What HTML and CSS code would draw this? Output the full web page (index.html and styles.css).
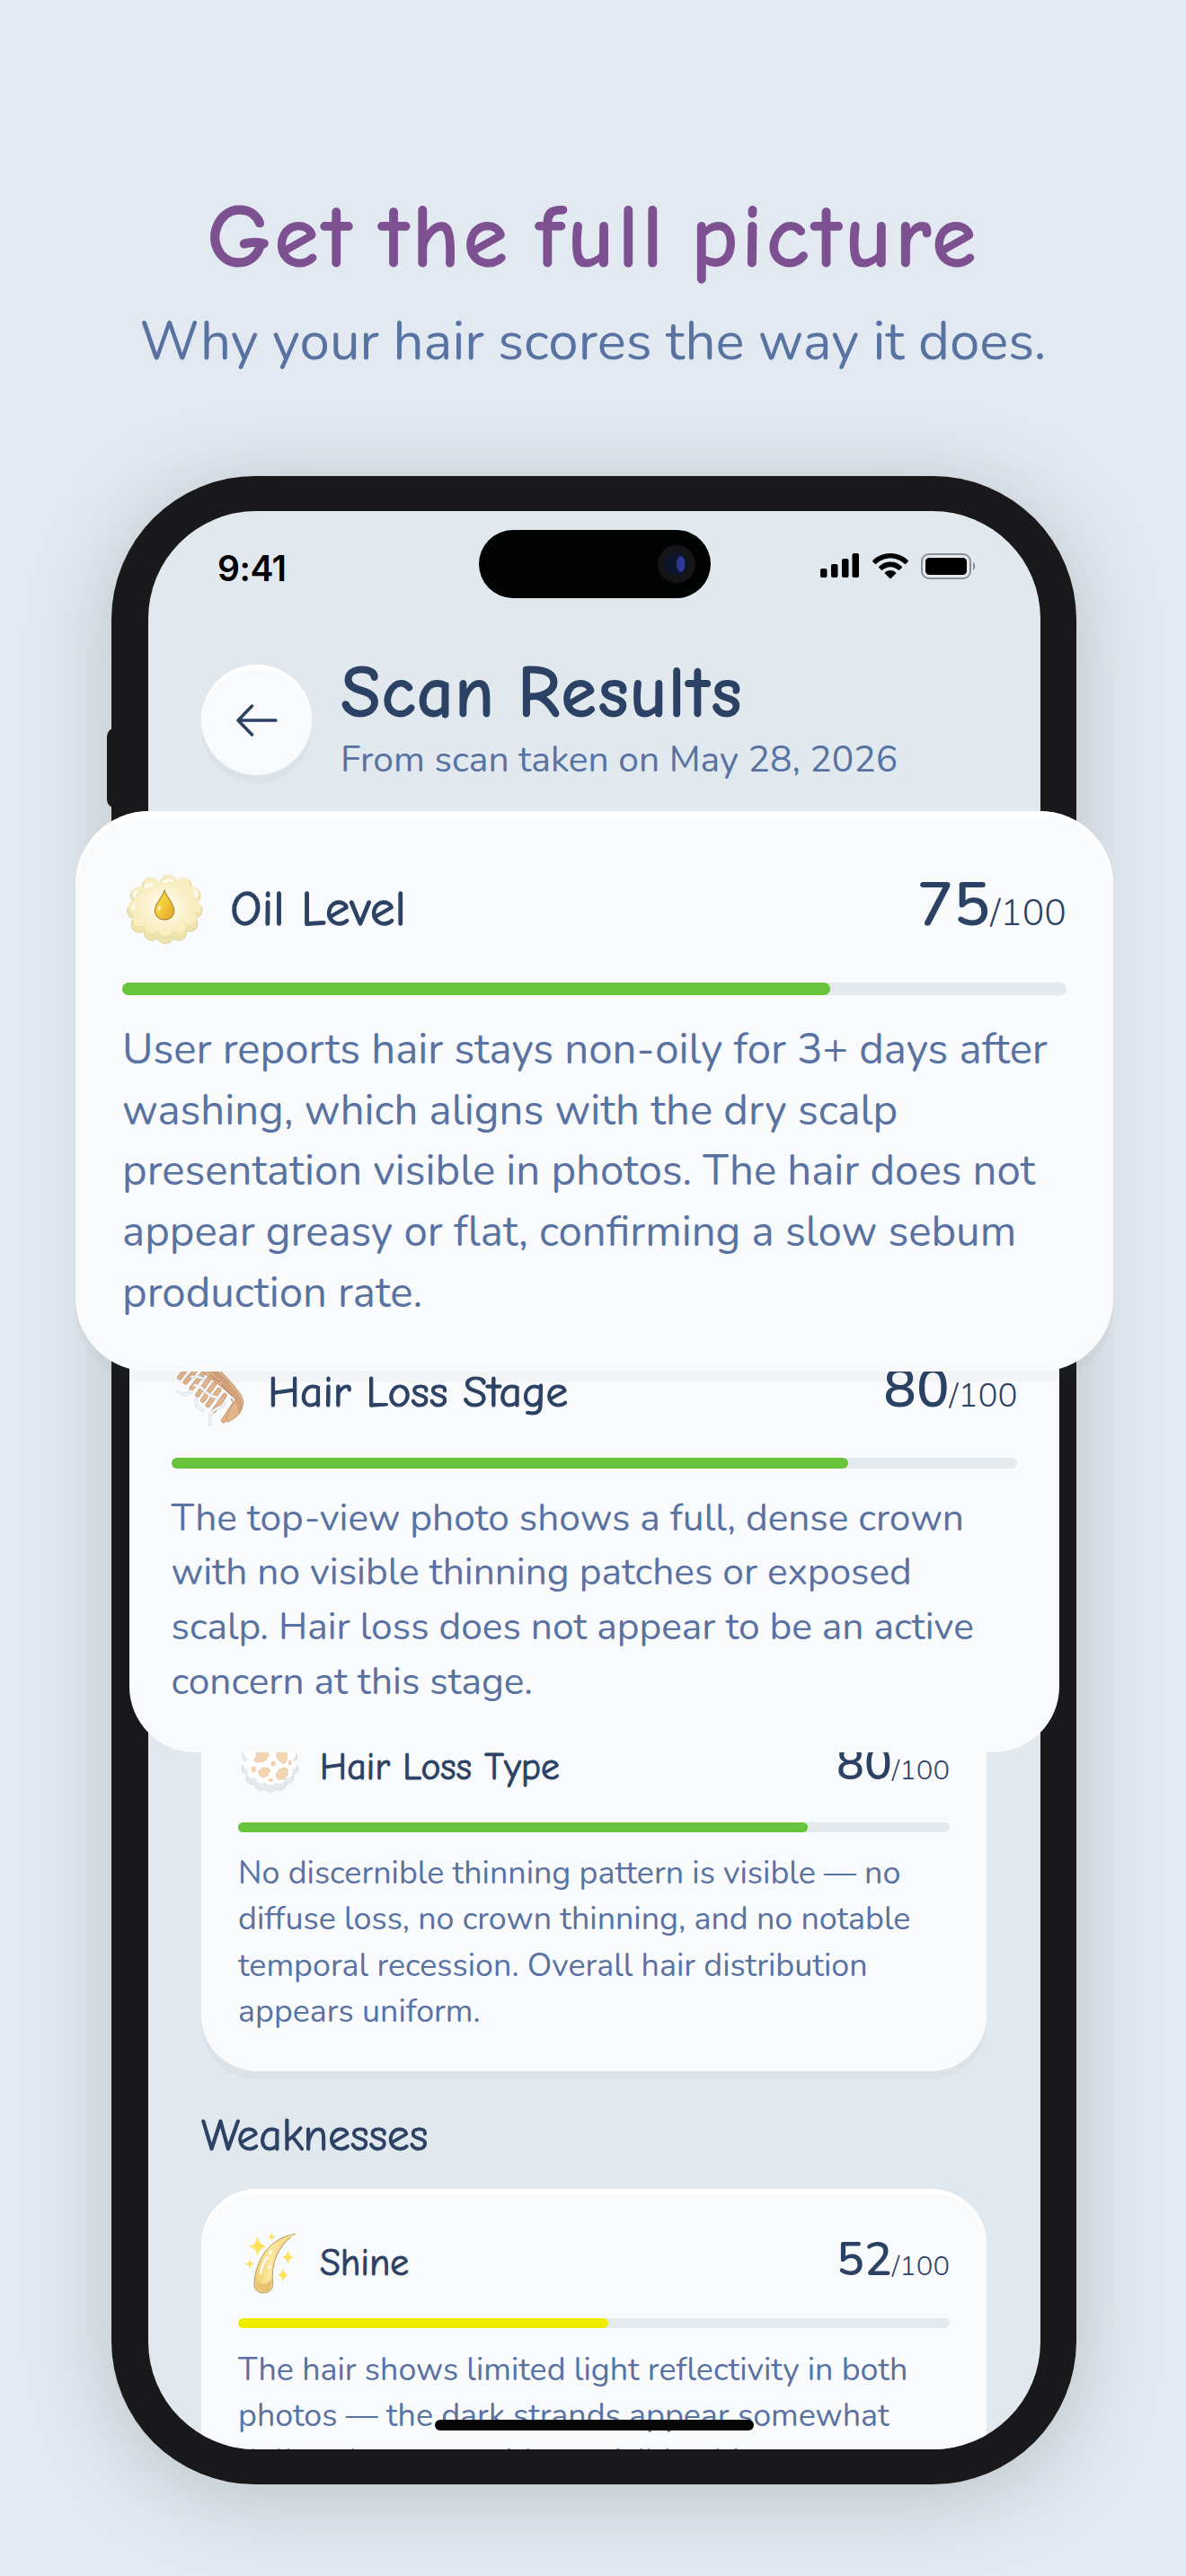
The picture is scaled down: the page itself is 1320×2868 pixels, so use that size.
FILE: index.html
```html
<!DOCTYPE html>
<html lang="en">
<head>
  <meta charset="UTF-8" />
  <meta name="viewport" content="width=device-width, initial-scale=1.0"/>
  <title>Scan Results</title>
  <link rel="stylesheet" href="styles.css">
</head>
<body>

<header class="hero">
  <h1>Get the full picture</h1>
  <p>Why your hair scores the way it does.</p>
</header>

<main class="phone">
  <div class="screen">

    <!-- Status bar -->
    <div class="status">
      <span class="time">9:41</span>
      <div class="island"><span class="camera"></span></div>
      <div class="status-icons">
        <svg width="44" height="28" viewBox="0 0 44 28"><rect x="0" y="17" width="7.5" height="10" rx="2"/><rect x="12" y="12" width="7.5" height="15" rx="2"/><rect x="24" y="6" width="7.5" height="21" rx="2"/><rect x="35.500" y="0" width="7.5" height="27" rx="2"/></svg>
        <svg class="wifi" width="40" height="28" viewBox="0 0 40 28"><path d="M20 0C12.500 0 5.500 3 .5 7.800c-.5.500-.5 1.200 0 1.700l2.300 2.300c.5.500 1.200.5 1.600 0C8.500 8 14 5.600 20 5.600S31.500 8 35.600 11.800c.4.500 1.100.5 1.600 0l2.300-2.300c.5-.5.5-1.200 0-1.700C34.500 3 27.500 0 20 0z"/><path d="M20 9.600c-4.900 0-9.300 1.900-12.600 5-.5.500-.5 1.200 0 1.700l2.400 2.300c.4.400 1.100.4 1.600 0 2.300-2 5.300-3.300 8.600-3.300s6.300 1.300 8.600 3.300c.5.400 1.200.4 1.600 0l2.400-2.300c.5-.5.5-1.200 0-1.700-3.300-3.100-7.700-5-12.600-5z"/><path d="M20 19c-2.300 0-4.300.8-5.900 2.200-.5.400-.5 1.100 0 1.600l5 4.900c.5.400 1.300.4 1.800 0l5-4.900c.5-.5.5-1.200 0-1.600C24.300 19.800 22.300 19 20 19z"/></svg>
        <svg width="62" height="29" viewBox="0 0 62 29"><rect x="1" y="1" width="54" height="27" rx="8" fill="none" stroke="#8d9195" stroke-width="2"/><rect x="5" y="5" width="46" height="19" rx="4.500"/><path d="M58 10c3 1 3 8 0 9z" fill="#8d9195"/></svg>
      </div>
    </div>

    <!-- Page heading -->
    <div class="page-head">
      <button class="back" aria-label="Back">
        <svg width="46" height="36" viewBox="0 0 46 36"><path d="M44 18H2M17.500 2 2 18l15.500 16"/></svg>
      </button>
      <div>
        <h2>Scan Results</h2>
        <p>From scan taken on May 28, 2026</p>
      </div>
    </div>

    <section class="results">
      <article class="card">
        <div class="card-head">
          <svg class="icon" viewBox="45 4.500 216 216">
            <defs>
              <g id="cotton">
                <ellipse cx="151" cy="112" rx="76" ry="66"/>
                <circle cx="80" cy="74" r="20"/><circle cx="78" cy="116" r="20"/><circle cx="92" cy="148" r="20"/><circle cx="122" cy="168" r="20"/><circle cx="153" cy="174" r="20"/><circle cx="184" cy="168" r="20"/><circle cx="210" cy="147" r="20"/><circle cx="225" cy="116" r="20"/><circle cx="222" cy="76" r="20"/><circle cx="195" cy="48" r="20"/><circle cx="110" cy="48" r="20"/><circle cx="151" cy="40" r="20"/>
              </g>
            </defs>
            <use href="#cotton" fill="#e3e7ec" stroke="#c9ced5" stroke-width="3"/>
            <use href="#cotton" fill="#e5e9ee"/>
            <use href="#cotton" fill="#fff" transform="translate(8 2) scale(.95 .87)"/>
            <g fill="#f3d5b4" stroke="#e9c49d" stroke-width="2">
              <path d="M98 90q0-10 7-14-2-14 10-20h26q8 8 6 18-8 6-9 14-10 8-20 5-12 6-20-3z"/>
              <path d="M175 80q-6-12 2-24h26q8 10 5 20 3 8-2 12 2 8-8 11-8 0-10-7-8 0-13-12z"/>
              <path d="M113 128q0-8 8-10 8-10 16-5 10-2 14 5 4 8-4 12 0 10-8 11-6 8-14 2-12-2-12-15z"/>
              <path d="M172 140q-2-10 6-14 2-12 12-10 8-6 16-2 8 4 4 14 4 8-4 14-4 12-16 10-14 4-18-12z"/>
              <ellipse cx="97" cy="118" rx="7" ry="9"/><ellipse cx="162" cy="99" rx="7" ry="8"/><ellipse cx="218" cy="96" rx="5" ry="8"/><ellipse cx="154" cy="154" rx="7" ry="5"/>
            </g>
          </svg>
          <div class="card-title"><h3>Hair Loss Type</h3><p class="score">80<small>/100</small></p></div>
        </div>
        <div class="bar"><span style="width:80%"></span></div>
        <p class="note">No discernible thinning pattern is visible — no diffuse loss, no crown thinning, and no notable temporal recession. Overall hair distribution appears uniform.</p>
      </article>

      <h2 class="group">Weaknesses</h2>

      <article class="card">
        <div class="card-head">
          <svg class="icon" viewBox="45 42 216 216">
            <defs>
              <linearGradient id="strand" x1="0" x2="1"><stop offset="0" stop-color="#f0cf75"/><stop offset=".4" stop-color="#fde9a0"/><stop offset="1" stop-color="#e7bd6a"/></linearGradient>
            </defs>
            <path d="M235 52C190 58 150 84 124 128c-16 30-25 62-25 92 0 18 12 28 31 28s31-10 31-28c0-16-3-30 0-48 6-50 30-90 74-120z" fill="url(#strand)" stroke="#a8874c" stroke-width="2.500"/>
            <path d="M107 205c10 20 38 18 50-6 0 20 2 34-8 41-12 7-34 4-41-9-3-7-3-16-1-26z" fill="#e8bf73"/>
            <path d="M120 182c4-22 12-40 22-52M150 118l6-8" fill="none" stroke="#fff" stroke-width="7" stroke-linecap="round"/>
            <path d="M229 56c-32 8-56 28-70 58" fill="none" stroke="#fbe7a2" stroke-width="5" stroke-linecap="round"/>
            <g fill="#fde05c">
              <path d="M110 60q4 29 31 33-27 4-31 33-4-29-30-33 26-4 30-33z"/>
              <path d="M157 48q2 11 12 13-10 2-12 14-2-12-11-14 9-2 11-13z"/>
              <path d="M211 107q4 20 21 23-17 3-21 22-4-19-19-22 15-3 19-23z"/>
              <path d="M84 134q2 15 15 17-13 2-15 17-2-15-15-17 13-2 15-17z"/>
              <path d="M195 167q4 19 20 22-16 3-20 21-4-18-19-21 15-3 19-22z"/>
            </g>
            <path d="M151 152q1 8 8 9-7 1-8 8-1-7-8-8 7-1 8-9z" fill="#fff"/>
          </svg>
          <div class="card-title"><h3>Shine</h3><p class="score">52<small>/100</small></p></div>
        </div>
        <div class="bar mid"><span style="width:52%"></span></div>
        <p class="note">The hair shows limited light reflectivity in both photos — the dark strands appear somewhat dull and uneven without visible shine.</p>
      </article>
    </section>

    <div class="home"></div>
  </div>
</main>

<!-- Enlarged cards floating over the phone -->
<section class="popout">
  <article class="card large">
    <div class="card-head">
      <svg class="icon" viewBox="18 15 285 285">
        <defs>
          <g id="puff">
            <ellipse cx="160" cy="158" rx="95" ry="86"/>
            <circle cx="172" cy="70" r="26"/><circle cx="222" cy="80" r="26"/><circle cx="252" cy="112" r="26"/><circle cx="258" cy="160" r="26"/><circle cx="243" cy="205" r="26"/><circle cx="206" cy="234" r="26"/><circle cx="162" cy="244" r="27"/><circle cx="117" cy="234" r="26"/><circle cx="76" cy="208" r="27"/><circle cx="61" cy="162" r="26"/><circle cx="73" cy="112" r="26"/><circle cx="113" cy="80" r="27"/>
          </g>
          <radialGradient id="cream"><stop offset=".2" stop-color="#fffbea"/><stop offset="1" stop-color="#f8eec2"/></radialGradient>
          <linearGradient id="oil" x1="0" x2="1" y2="1"><stop offset=".4" stop-color="#f5d13b"/><stop offset="1" stop-color="#e2a32c"/></linearGradient>
        </defs>
        <use href="#puff" fill="#ecdfa8" stroke="#d9cc98" stroke-width="4"/>
        <use href="#puff" fill="#eee2ad"/>
        <use href="#puff" fill="#f8eec2" transform="translate(5 4) scale(.97 .89)"/>
        <ellipse cx="160" cy="148" rx="92" ry="80" fill="url(#cream)"/>
        <path d="M95 84q8-12 24-10M160 64q12-8 24-2M58 115q0-12 9-18M258 96q9 6 8 18M55 158q-1-10 3-15" fill="none" stroke="#fffdf3" stroke-width="8" stroke-linecap="round"/>
        <path d="M159 94c6 22 32 44 32 67 0 18-14 31-32 31s-32-13-32-31c0-23 26-45 32-67z" fill="url(#oil)" stroke="#a37c2b" stroke-width="3"/>
        <ellipse cx="142" cy="152" rx="5" ry="9" fill="#fdf0a6" transform="rotate(20 142 152)"/>
      </svg>
      <div class="card-title"><h3>Oil Level</h3><p class="score">75<small>/100</small></p></div>
    </div>
    <div class="bar"><span style="width:75%"></span></div>
    <p class="note">User reports hair stays non-oily for 3+ days after washing, which aligns with the dry scalp presentation visible in photos. The hair does not appear greasy or flat, confirming a slow sebum production rate.</p>
  </article>

  <article class="card medium">
    <div class="card-head">
      <svg class="icon" viewBox="30 -10 255.800 255.800">
        <g fill="none" stroke-linecap="round">
          <path d="M100 15 57 70M118 36 76 86M137 54 97 106M155 74 117 128M172 92 134 146M188 112 151 162M207 130 172 180M235 165 203 214" stroke="#c08f66" stroke-width="16"/>
          <path d="M100 15 57 70M118 36 76 86M137 54 97 106M155 74 117 128M172 92 134 146M188 112 151 162M207 130 172 180M235 165 203 214" stroke="#e3b58a" stroke-width="12"/>
        </g>
        <path d="M95 20 135-5q30 15 65 60 35 35 60 70 14 22 6 46-8 30-50 48-10-14 8-42l22-35z" fill="#e3b58a" stroke="#c08f66" stroke-width="2.500"/>
        <path d="M180 45q55 50 80 95 8 20 4 36-4 12-12 20 4-28-12-50-30-55-85-100z" fill="#c99a76" opacity=".7"/>
        <path d="M160 62l30 24M196 92l36 40M228 140l10 16" stroke="#b98a64" stroke-width="4" fill="none"/>
        <g fill="none" stroke-linecap="round">
          <path d="M50 117q22 20 46-2M96 68q24-4 44 8M106 96q20 2 36 20t46 22M112 142q-4 26 22 38M158 226q-6-40 22-52t28-22" stroke="#c3c9cf" stroke-width="9"/>
          <path d="M50 117q22 20 46-2M96 68q24-4 44 8M106 96q20 2 36 20t46 22M112 142q-4 26 22 38M158 226q-6-40 22-52t28-22" stroke="#f6f8fa" stroke-width="6"/>
        </g>
      </svg>
      <div class="card-title"><h3>Hair Loss Stage</h3><p class="score">80<small>/100</small></p></div>
    </div>
    <div class="bar"><span style="width:80%"></span></div>
    <p class="note">The top-view photo shows a full, dense crown with no visible thinning patches or exposed scalp. Hair loss does not appear to be an active concern at this stage.</p>
  </article>
</section>

</body>
</html>
```
FILE: styles.css
```css
* { box-sizing: border-box; margin: 0; padding: 0; }
body { position: relative; width: 1320px; height: 2868px; overflow: hidden; background: #e2e9f1; color: #2c4265; font-family: Nunito, "Open Sans", sans-serif; }
h1, h2, h3 { font-family: "Comic Neue", Nunito, "Open Sans", sans-serif; }

.hero { height: 530px; padding-top: 204px; text-align: center; }
.hero h1 { font-size: 102px; line-height: 120px; font-weight: 700; letter-spacing: 3px; word-spacing: -12px; color: #7d5191; }
.hero p { font-size: 60px; line-height: 82px; margin-top: 15px; color: #5872a2; }

/* Phone */
.phone { position: relative; width: 1074px; height: 2236px; margin-left: 124px; padding: 39px 40px 39px 41px; border-radius: 160px; background: #19191b; box-shadow: 0 12px 90px rgba(100, 115, 110, 0.32); }
.phone::before { content: ""; position: absolute; left: -5px; top: 280px; width: 20px; height: 90px; border-radius: 10px; background: #19191b; }
.screen { position: relative; height: 2158px; padding: 21px 59px 0; border-radius: 120px; overflow: hidden; background: #e1e8ee; }

.status { position: relative; display: flex; justify-content: space-between; align-items: center; height: 84px; padding: 0 12px 0 18px; color: #000; }
.time { font: 600 39px Inter, sans-serif; letter-spacing: -0.5px; }
.island { position: absolute; left: 309px; top: 0; width: 258px; height: 76px; border-radius: 38px; background: #020303; }
.camera { position: absolute; right: 17px; top: 17px; width: 42px; height: 42px; border-radius: 50%; border: 8px solid #151518; background: radial-gradient(ellipse 5px 9px at 68% 50%, #2c3a96 90%, #0b152b); }
.status-icons { display: flex; gap: 14px; padding-bottom: 3px; }

.page-head { display: flex; gap: 32px; margin-top: 53px; height: 144px; }
.back { display: flex; align-items: center; justify-content: center; width: 123px; height: 123px; margin-top: 13px; border: 0; border-radius: 50%; background: #f9fafc; box-shadow: inset 0 5px 1px #fff, 0 9px 2px rgba(80, 100, 90, 0.04); }
.back path { fill: none; stroke: #2c4265; stroke-width: 3.5; stroke-linecap: round; stroke-linejoin: round; }
.page-head h2 { font-size: 82px; line-height: 90px; font-weight: 700; letter-spacing: 0.6px; word-spacing: -5px; white-space: nowrap; }
.page-head p { font-size: 40.8px; line-height: 56px; margin-top: 1px; color: #5872a2; }

/* Result cards */
.results { margin-top: 1013.5px; }
.group { height: 131px; padding-top: 6px; font-size: 49.5px; line-height: 131px; font-weight: 400; -webkit-text-stroke: 1px; }
.card { width: 874px; padding: 42px 41px; border-radius: 62px; background: #f9fafc; box-shadow: inset 0 5px 1px #fff, 0 9px 1px rgba(70, 90, 80, 0.035); }
.card-head { display: flex; align-items: center; gap: 19px; height: 82px; margin-bottom: 20.5px; }
.icon { width: 72px; height: 72px; }
.card-title { flex: 1; display: flex; align-items: baseline; justify-content: space-between; }
.card-title h3 { font-size: 41.5px; font-weight: 400; letter-spacing: 0.2px; -webkit-text-stroke: 1px; }
.score { font-size: 51.5px; line-height: 70px; font-weight: 600; }
.score small { font-size: 31px; font-weight: 300; }
.bar { height: 10.6px; margin-bottom: 20.5px; border-radius: 6px; background: #e4e9ed; }
.bar span { display: block; height: 100%; border-radius: 6px; background: #68c43a; }
.bar.mid span { background: #efec00; }
.note { font-size: 35.85px; line-height: 51.2px; margin-bottom: -1px; color: #5872a2; }

.popout { position: absolute; top: 903px; left: 0; width: 1320px; display: flex; flex-direction: column; align-items: center; padding-left: 3px; }
.large { position: relative; z-index: 1; zoom: 1.3215; padding: 42px 39.4px; }
.medium { zoom: 1.1845; margin-top: -64px; padding: 42px 39.4px; box-shadow: none; }

.home { position: absolute; left: 319px; bottom: 21px; width: 355px; height: 12px; border-radius: 6px; background: #050505; }
```
